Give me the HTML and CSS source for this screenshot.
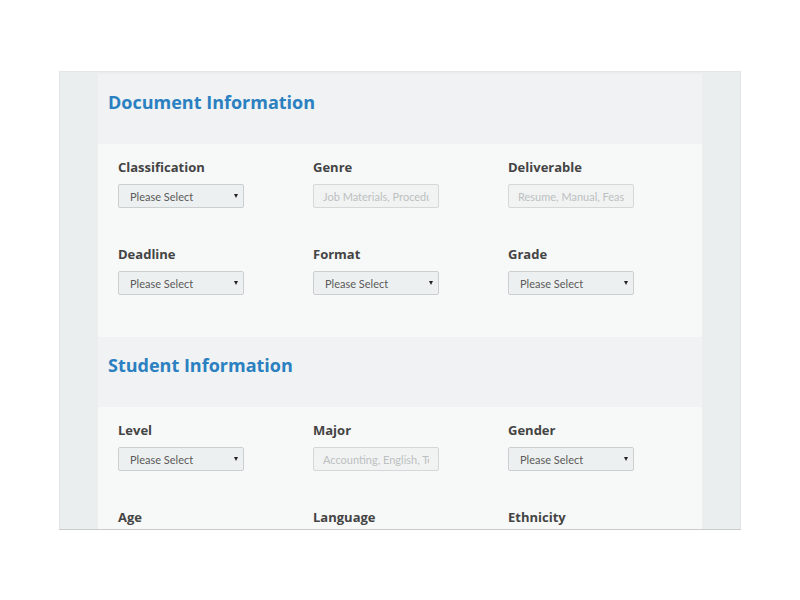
FILE: index.html
```html
<!DOCTYPE html>
<html>
<head>
<meta charset="utf-8">
<link rel="stylesheet" href="styles.css">
</head>
<body>
<div class="frame">
  <div class="column">
    <div class="section-head"><h2>Document Information</h2></div>
    <div class="section-body">
      <div class="field"><label>Classification</label><span class="sel"><select><option>Please Select</option></select></span></div>
      <div class="field"><label>Genre</label><input type="text" placeholder="Job Materials, Procedures"></div>
      <div class="field"><label>Deliverable</label><input type="text" placeholder="Resume, Manual, Feasibility"></div>
      <div class="field"><label>Deadline</label><span class="sel"><select><option>Please Select</option></select></span></div>
      <div class="field"><label>Format</label><span class="sel"><select><option>Please Select</option></select></span></div>
      <div class="field"><label>Grade</label><span class="sel"><select><option>Please Select</option></select></span></div>
    </div>
    <div class="section-head"><h2>Student Information</h2></div>
    <div class="section-body">
      <div class="field"><label>Level</label><span class="sel"><select><option>Please Select</option></select></span></div>
      <div class="field"><label>Major</label><input type="text" placeholder="Accounting, English, Technical"></div>
      <div class="field"><label>Gender</label><span class="sel"><select><option>Please Select</option></select></span></div>
      <div class="field"><label>Age</label><span class="sel"><select><option>Please Select</option></select></span></div>
      <div class="field"><label>Language</label><span class="sel"><select><option>Please Select</option></select></span></div>
      <div class="field"><label>Ethnicity</label><span class="sel"><select><option>Please Select</option></select></span></div>
    </div>
  </div>
</div>
</body>
</html>
```
FILE: styles.css
```css
html, body {
  margin: 0;
  padding: 0;
  background: #ffffff;
}
body {
  font-family: "Open Sans", "Liberation Sans", sans-serif;
}
.frame {
  width: 604px;
  height: 455px;
  margin: 71px auto 0;
  background: #ebeeef;
  border: 1px solid #e3e6e6;
  border-bottom-color: #c9cbcb;
  overflow: hidden;
  padding: 2px 38px 0;
  box-sizing: content-box;
}
.column {
  background: #f7f8f8;
}
.section-head {
  background: #f0f2f3;
  height: 70px;
  box-sizing: border-box;
  padding: 16px 10px 0;
}
.section-head h2 {
  margin: 0;
  font-size: 18px;
  line-height: 24px;
  font-weight: 700;
  color: #2a80c1;
}
.section-body {
  display: grid;
  grid-template-columns: repeat(3, 195px);
  row-gap: 37px;
  padding: 14px 0 42px 20px;
}
.field {
  display: flex;
  flex-direction: column;
  align-items: flex-start;
}
.field label {
  font-size: 13px;
  line-height: 18px;
  font-weight: 700;
  color: #444444;
  margin-bottom: 8px;
}
.sel {
  position: relative;
  display: block;
  width: 126px;
  height: 24px;
}
.sel::after {
  content: "";
  position: absolute;
  right: 6px;
  top: 10px;
  border-left: 2.5px solid transparent;
  border-right: 2.5px solid transparent;
  border-top: 4px solid #222;
}
.sel select, .field input {
  appearance: none;
  -webkit-appearance: none;
  width: 126px;
  height: 24px;
  box-sizing: border-box;
  margin: 0;
  border: 1px solid #cbcfcf;
  border-radius: 2px;
  background: #edf0f0;
  font-family: Lato, "Open Sans", sans-serif;
  font-size: 11px;
  color: #5a5a5a;
  padding: 1px 0 0 11px;
  outline: none;
}
.field input {
  background: #f1f3f3;
  border-color: #d4d8d8;
  padding-left: 9px;
  padding-right: 9px;
}
.field input::placeholder {
  color: #bcc0c0;
}
```
